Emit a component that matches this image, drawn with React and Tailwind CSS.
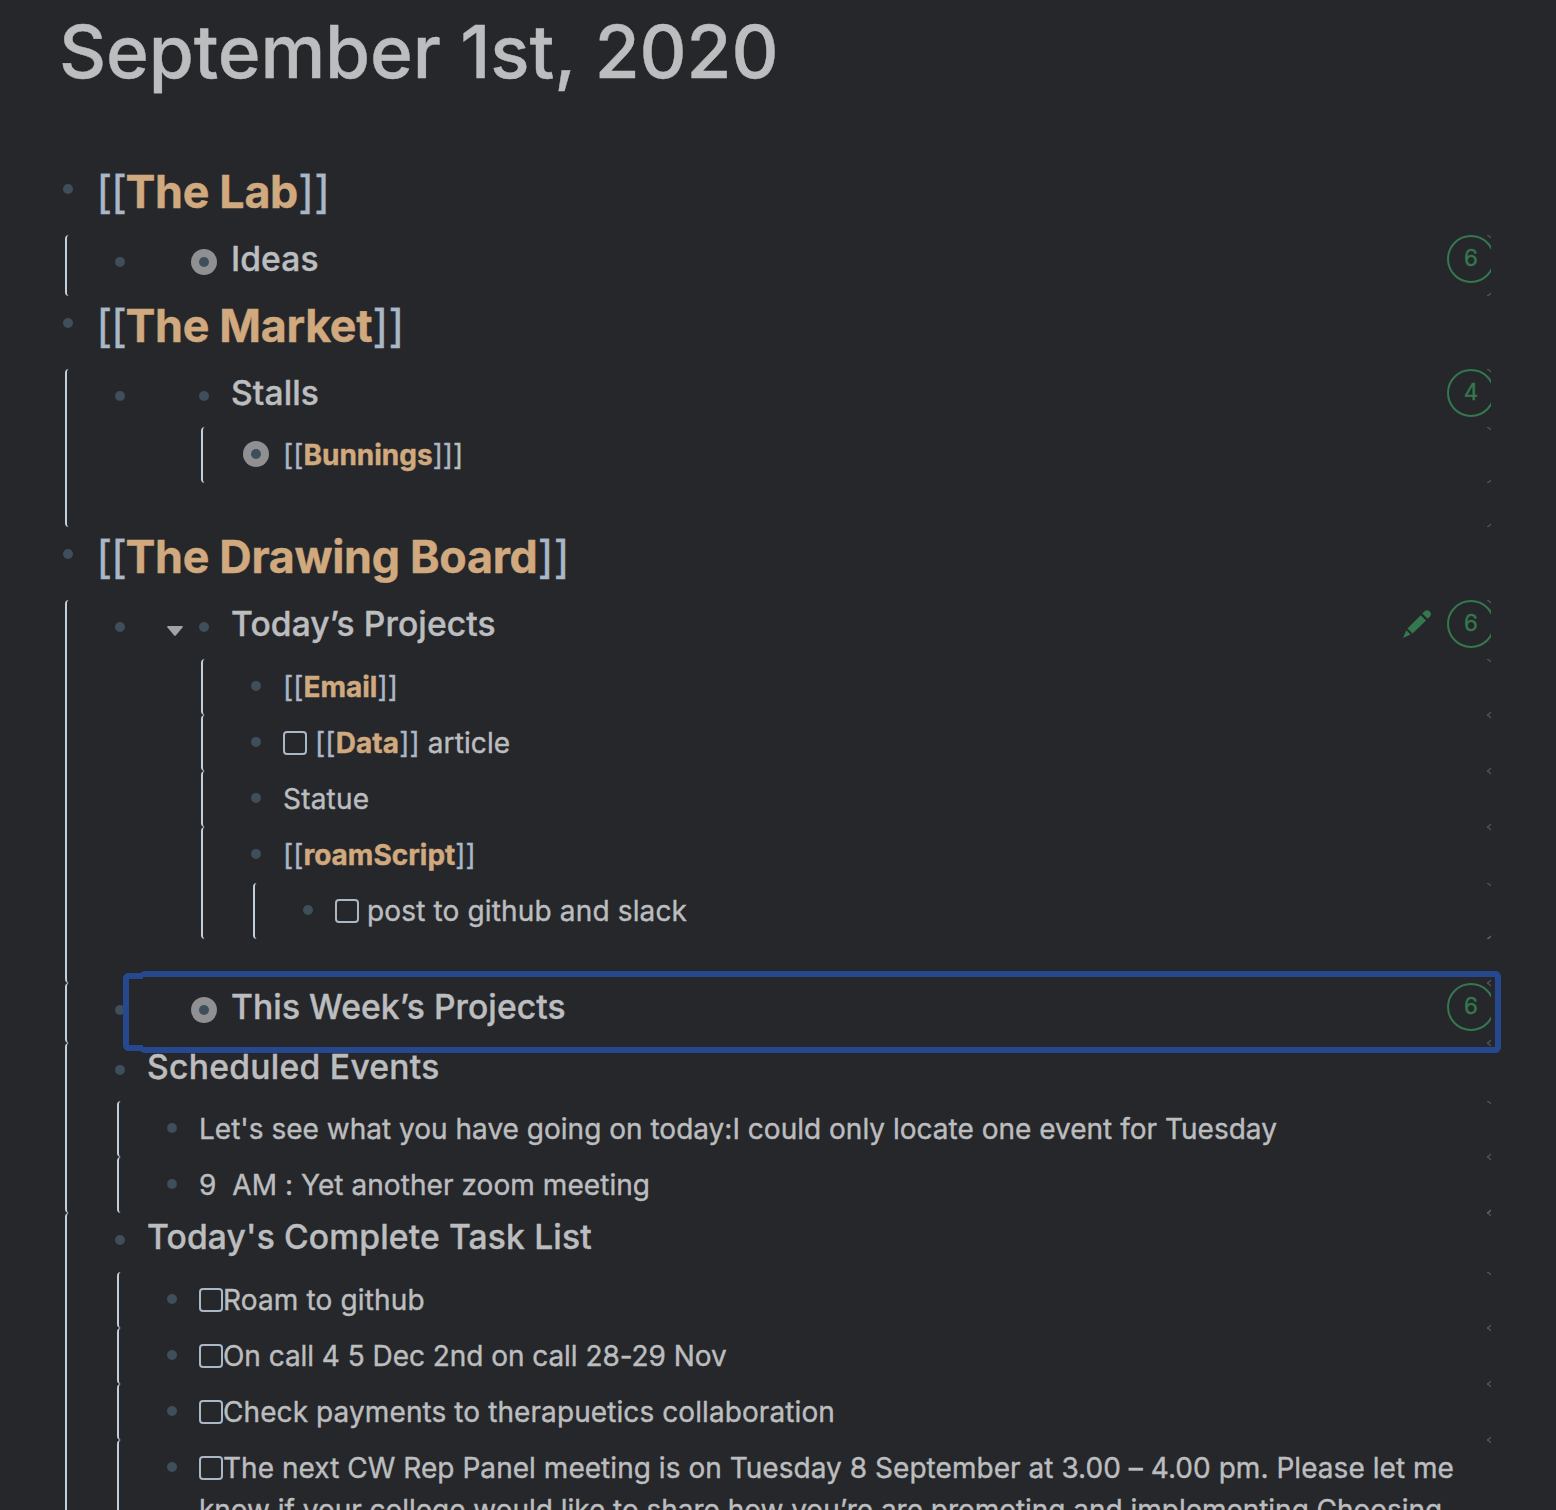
import React from "react";

function Corners() {
  return (
    <>
      <svg className="absolute right-0 top-0 h-1 w-1" viewBox="0 0 4 4" fill="none" stroke="#77797c" strokeWidth="0.8">
        <path d="M0.3 0.5Q3.4 0.6 3.6 3.2" />
      </svg>
      <svg className="absolute bottom-0 right-0 h-1 w-1" viewBox="0 0 4 4" fill="none" stroke="#77797c" strokeWidth="0.8">
        <path d="M0.3 3.5Q3.4 3.4 3.6 0.8" />
      </svg>
    </>
  );
}

function Bullet({ closed }) {
  return (
    <span
      className={
        closed
          ? "-mx-2 flex size-[26px] shrink-0 items-center justify-center rounded-full bg-[#909092]"
          : "flex size-[10px] shrink-0 items-center justify-center"
      }
    >
      <span className="size-[10px] rounded-full bg-[#3f4e5b]" />
    </span>
  );
}

function Check() {
  return <span className="inline-block size-6 rounded-[4px] border-2 border-[#a9b7c6] align-[-2px]" />;
}

function Ref({ children, large }) {
  return (
    <>
      <span className={large ? "tracking-[-1.6px] text-[#a9b7c6]" : "text-[#a9b7c6]"}>[[</span>
      <span className="font-bold text-[#d0a97e]">{children}</span>
      <span className="text-[#a9b7c6]">]]</span>
    </>
  );
}

/* An outline block: a guide line on the left, its own row, then nested blocks. */
function Block({ row, children, className = "", overlay }) {
  return (
    <div className={`relative ml-[52px] rounded-l-[4px] border-l-2 border-[#c3d0dc] ${className}`}>
      {row}
      <div className="-ml-0.5">{children}</div>
      <Corners />
      {overlay}
    </div>
  );
}

function Line({ children, closed, className = "" }) {
  return (
    <div className="flex pl-12 pr-2">
      <div className="flex h-[54px] items-center">
        <Bullet closed={closed} />
      </div>
      <p className={`min-h-[56px] flex-1 whitespace-nowrap pl-[22px] pt-[7px] text-[28px] leading-[42px] ${className}`}>
        {children}
      </p>
    </div>
  );
}

function Heading({ children, className = "" }) {
  return (
    <div className="flex h-[58px] pl-12">
      <div className="flex h-[54px] items-center">
        <Bullet />
      </div>
      <h3 className={`pl-[22px] text-[33.6px] font-medium leading-[48px] ${className}`}>{children}</h3>
    </div>
  );
}

function Embed({ title, count, closed, open, edit, className = "h-[58px]" }) {
  return (
    <div className={`flex pl-12 ${className}`}>
      <div className="flex h-[54px] items-center">
        <Bullet />
        <span className="flex w-[74px] justify-end pr-4 pt-2">
          {open && (
            <svg className="h-[10px] w-4" viewBox="0 0 16 10" fill="#a3a3a4">
              <path d="M0.8 0H15.2Q16.4 0.4 15.5 1.5L8.8 9.4Q8 10.3 7.2 9.4L0.5 1.5Q-0.4 0.4 0.8 0Z" />
            </svg>
          )}
        </span>
        <Bullet closed={closed} />
      </div>
      <h3 className="pl-[22px] text-[33.6px] font-medium leading-[48px] tracking-[0.1px]">{title}</h3>
      <div className="ml-auto flex h-12 items-center text-[#35784f]">
        {edit && (
          <svg className="mr-4 size-7" viewBox="0 0 28 28" fill="currentColor">
            <path d="M19.3 3.6L21.6 1.3Q24 -0.8 26.6 1.4Q29.2 4 27 6.4L24.6 8.8Z" />
            <path d="M17.8 5.2L23 10.4L9.6 23.6L4.4 18.4Z" />
            <path d="M3.3 20.3L7.6 24.6L0 28Z" />
          </svg>
        )}
        <div className="w-11 overflow-hidden">
          <div className="flex size-12 items-center justify-center rounded-full border-2 border-current pb-0.5 text-[22.4px] leading-none">
            {count}
          </div>
        </div>
      </div>
    </div>
  );
}

function Page({ title, children }) {
  return (
    <section>
      <div className="flex h-[73px]">
        <div className="flex h-[54px] items-center">
          <Bullet />
        </div>
        <h1 className="pl-[23px] text-[44.8px] leading-[60px] tracking-[-0.3px]">
          <Ref large>{title}</Ref>
        </h1>
      </div>
      <div className="-ml-[50px]">{children}</div>
    </section>
  );
}

function Selection() {
  return (
    <>
      <div className="absolute -top-[10px] left-14 z-10 h-[78px] w-5 rounded-l-[6px] border-[6px] border-r-0 border-[#26488f]" />
      <div className="absolute -right-[10px] -top-3 left-[72px] z-10 h-[82px] rounded-[6px] border-[6px] border-l-0 border-[#26488f]" />
    </>
  );
}

export default function App() {
  return (
    <main className="h-[1510px] w-[1556px] overflow-hidden bg-[#26272b] pl-[63px] pr-[65px] font-['Inter',sans-serif] text-[#bcbdbf] [-webkit-text-stroke:0.4px_currentColor]">
      <h1 className="-ml-1 h-[162px] whitespace-nowrap text-[73px] font-medium leading-[103px] tracking-[-0.15px]">
        September 1st, 2020
      </h1>

      <Page title="The Lab">
        <Block row={<Embed title="Ideas" count={6} closed className="h-[61px]" />} />
      </Page>

      <Page title="The Market">
        <Block row={<Embed title="Stalls" count={4} />} className="pb-11">
          <div className="ml-[84px]">
            <Block row={<Line closed><Ref>Bunnings</Ref>]</Line>} />
          </div>
        </Block>
      </Page>

      <Page title="The Drawing Board">
        <Block row={<Embed title="Today’s Projects" count={6} open edit className="h-[59px]" />} className="pb-11">
          <div className="ml-[84px]">
            <Block row={<Line><Ref>Email</Ref></Line>} />
            <Block row={<Line className="tracking-[0.1px]"><Check /> <Ref>Data</Ref> article</Line>} />
            <Block row={<Line className="tracking-[0.2px]">Statue</Line>} />
            <Block row={<Line><Ref>roamScript</Ref></Line>}>
              <Block row={<Line className="tracking-[0.15px]"><Check /> post to github and slack</Line>} />
            </Block>
          </div>
        </Block>
        <Block row={<Embed title="This Week’s Projects" count={6} closed className="h-[60px]" />} overlay={<Selection />} />
        <Block row={<Heading className="tracking-[0.3px]">Scheduled Events</Heading>}>
          <Block row={<Line className="tracking-[0.01px]">Let's see what you have going on today:I could only locate one event for Tuesday</Line>} />
          <Block row={<Line className="tracking-[0.06px]">9&nbsp; AM : Yet another zoom meeting</Line>} />
        </Block>
        <Block row={<Heading className="tracking-[0.17px]">Today's Complete Task List</Heading>}>
          <div className="pt-px">
            <Block row={<Line className="tracking-[0.15px]"><Check />Roam to github</Line>} />
            <Block row={<Line className="tracking-[-0.05px]"><Check />On call 4 5 Dec 2nd on call 28-29 Nov</Line>} />
            <Block row={<Line className="tracking-[0.09px]"><Check />Check payments to therapuetics collaboration</Line>} />
            <Block
              row={
                <Line>
                  <span className="tracking-[0.04px]">
                    <Check />The next CW Rep Panel meeting is on Tuesday 8 September at 3.00 – 4.00 pm. Please let me
                  </span>
                  <br />
                  <span className="tracking-[-0.03px]">
                    know if your college would like to share how you’re are promoting and implementing Choosing
                  </span>
                </Line>
              }
            />
          </div>
        </Block>
      </Page>
    </main>
  );
}
